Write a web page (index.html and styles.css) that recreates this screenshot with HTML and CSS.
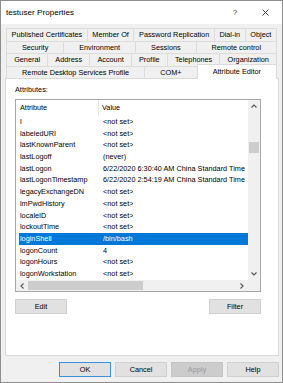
FILE: index.html
```html
<!DOCTYPE html>
<html lang="en">
<head>
<meta charset="UTF-8">
<title>testuser Properties</title>
<link rel="stylesheet" href="styles.css">
</head>
<body>
<div class="dialog">
  <div class="title-bar">
    <span class="title">testuser Properties</span>
    <span class="title-help">?</span>
    <span class="title-close">
      <svg width="7" height="7" viewBox="0 0 7 7"><path d="M0.5 0.5 L6.5 6.5 M6.5 0.5 L0.5 6.5" stroke="#333" stroke-width="0.9" fill="none"/></svg>
    </span>
  </div>

  <div class="tabs">
    <div class="tab-row">
      <span class="tab">Published Certificates</span>
      <span class="tab">Member Of</span>
      <span class="tab">Password Replication</span>
      <span class="tab">Dial-in</span>
      <span class="tab">Object</span>
    </div>
    <div class="tab-row">
      <span class="tab">Security</span>
      <span class="tab">Environment</span>
      <span class="tab">Sessions</span>
      <span class="tab">Remote control</span>
    </div>
    <div class="tab-row">
      <span class="tab">General</span>
      <span class="tab">Address</span>
      <span class="tab">Account</span>
      <span class="tab">Profile</span>
      <span class="tab">Telephones</span>
      <span class="tab">Organization</span>
    </div>
    <div class="tab-row">
      <span class="tab">Remote Desktop Services Profile</span>
      <span class="tab">COM+</span>
      <span class="tab active">Attribute Editor</span>
    </div>
  </div>

  <div class="panel">
    <div class="label">Attributes:</div>
    <div class="list-box">
      <div class="list-main">
        <div class="list-header">
          <span class="head-name">Attribute</span>
          <span class="head-value">Value</span>
        </div>
        <div class="list-row"><span class="col-name">l</span><span class="col-value">&lt;not set&gt;</span></div>
        <div class="list-row"><span class="col-name">labeledURI</span><span class="col-value">&lt;not set&gt;</span></div>
        <div class="list-row"><span class="col-name">lastKnownParent</span><span class="col-value">&lt;not set&gt;</span></div>
        <div class="list-row"><span class="col-name">lastLogoff</span><span class="col-value">(never)</span></div>
        <div class="list-row"><span class="col-name">lastLogon</span><span class="col-value">6/22/2020 6:30:40 AM China Standard Time</span></div>
        <div class="list-row"><span class="col-name">lastLogonTimestamp</span><span class="col-value">6/22/2020 2:54:19 AM China Standard Time</span></div>
        <div class="list-row"><span class="col-name">legacyExchangeDN</span><span class="col-value">&lt;not set&gt;</span></div>
        <div class="list-row"><span class="col-name">lmPwdHistory</span><span class="col-value">&lt;not set&gt;</span></div>
        <div class="list-row"><span class="col-name">localeID</span><span class="col-value">&lt;not set&gt;</span></div>
        <div class="list-row"><span class="col-name">lockoutTime</span><span class="col-value">&lt;not set&gt;</span></div>
        <div class="list-row selected"><span class="col-name">loginShell</span><span class="col-value">/bin/bash</span></div>
        <div class="list-row"><span class="col-name">logonCount</span><span class="col-value">4</span></div>
        <div class="list-row"><span class="col-name">logonHours</span><span class="col-value">&lt;not set&gt;</span></div>
        <div class="list-row"><span class="col-name">logonWorkstation</span><span class="col-value">&lt;not set&gt;</span></div>
      </div>

      <div class="v-scroll">
        <span class="arrow">
          <svg width="6" height="4" viewBox="0 0 6 4"><path d="M0.5 3.5 L3 1 L5.5 3.5" stroke="#555" stroke-width="1.1" fill="none"/></svg>
        </span>
        <div class="v-track"><div class="v-thumb"></div></div>
        <span class="arrow">
          <svg width="6" height="4" viewBox="0 0 6 4"><path d="M0.5 0.5 L3 3 L5.5 0.5" stroke="#555" stroke-width="1.1" fill="none"/></svg>
        </span>
      </div>

      <div class="h-scroll">
        <span class="arrow">
          <svg width="4" height="6" viewBox="0 0 4 6"><path d="M3.5 0.5 L1 3 L3.5 5.5" stroke="#555" stroke-width="1.1" fill="none"/></svg>
        </span>
        <div class="h-track"><div class="h-thumb"></div></div>
        <span class="arrow">
          <svg width="4" height="6" viewBox="0 0 4 6"><path d="M0.5 0.5 L3 3 L0.5 5.5" stroke="#555" stroke-width="1.1" fill="none"/></svg>
        </span>
      </div>
      <div class="corner"></div>
    </div>

    <div class="panel-buttons">
      <button class="btn">Edit</button>
      <button class="btn">Filter</button>
    </div>
  </div>

  <div class="footer">
    <button class="btn default">OK</button>
    <button class="btn">Cancel</button>
    <button class="btn disabled">Apply</button>
    <button class="btn">Help</button>
  </div>
</div>
</body>
</html>
```

FILE: styles.css
```css
* {
  font-family: "Liberation Sans", Arial, sans-serif;
  box-sizing: border-box;
}

body {
  margin: 0;
  padding: 0;
  background-color: #ffffff;
}

.dialog {
  width: 283px;
  height: 383px;
  border: 1px solid #8e8e8e;
  background-color: #f0f0f0;
  display: flex;
  flex-direction: column;
}

.title-bar {
  height: 23px;
  background-color: #ffffff;
  display: flex;
  align-items: center;
  padding: 0 2px 0 5px;
}

.title {
  flex: 1;
  font-size: 8.1px;
  color: #000;
}

.title-help {
  width: 30px;
  text-align: center;
  font-size: 8px;
  color: #333;
}

.title-close {
  width: 30px;
  display: flex;
  justify-content: center;
  align-items: center;
}

/* tab strip, four rows stretched to full width */
.tabs {
  margin: 4px 5px 0 5px;
  display: flex;
  flex-direction: column;
}

.tab-row {
  display: flex;
  height: 12.5px;
  align-items: flex-end;
}

.tab {
  flex: 1 1 auto;
  height: 12.5px;
  line-height: 11.5px;
  text-align: center;
  font-size: 7.3px;
  color: #000;
  white-space: nowrap;
  border: 1px solid #dcdcdc;
  border-bottom: none;
  margin-right: -1px;
  background-color: #f0f0f0;
}

.tab:last-child {
  margin-right: 0;
}

.tab.active {
  height: 15px;
  line-height: 13px;
  background-color: #ffffff;
  position: relative;
  z-index: 1;
  margin-bottom: -1px;
}

.panel {
  height: 278px;
  margin: 0 3px 0 4px;
  background-color: #ffffff;
  border: 1px solid #d9d9d9;
  padding: 6px 0 0 9px;
}

.label {
  font-size: 7.3px;
  line-height: 10px;
  color: #000;
}

.list-box {
  margin-top: 4px;
  width: 246px;
  height: 193px;
  border: 1px solid #a8a8a8;
  display: grid;
  grid-template-columns: 232px 12px;
  grid-template-rows: 180px 11px;
}

.list-main {
  overflow: hidden;
  background-color: #ffffff;
}

.list-header {
  height: 16px;
  display: flex;
  font-size: 7.3px;
  line-height: 16px;
  color: #000;
}

.head-name {
  width: 83px;
  padding-left: 4px;
  border-right: 1px solid #e8e8e8;
}

.head-value {
  padding-left: 3px;
}

.list-row {
  height: 11.7px;
  margin-left: 3px;
  display: flex;
  font-size: 7.3px;
  line-height: 11.7px;
  color: #000;
  white-space: nowrap;
}

.list-row.selected {
  background-color: #0078d7;
  color: #ffffff;
}

.col-name {
  width: 84px;
  flex-shrink: 0;
  padding-left: 1px;
}

.col-value {
  overflow: hidden;
}

.v-scroll {
  background-color: #f0f0f0;
  display: flex;
  flex-direction: column;
}

.v-scroll .arrow {
  height: 12px;
  display: flex;
  justify-content: center;
  align-items: center;
}

.v-track {
  flex: 1;
}

.v-thumb {
  margin: 30px 1px 0 1px;
  height: 11px;
  background-color: #cdcdcd;
}

.h-scroll {
  background-color: #f0f0f0;
  display: flex;
}

.h-scroll .arrow {
  width: 12px;
  display: flex;
  justify-content: center;
  align-items: center;
}

.h-track {
  flex: 1;
  padding: 1px 0;
}

.h-thumb {
  width: 115px;
  height: 100%;
  background-color: #cdcdcd;
}

.corner {
  background-color: #f0f0f0;
}

.btn {
  width: 52px;
  height: 15px;
  padding: 0;
  font-size: 7.3px;
  color: #000;
  background-color: #e1e1e1;
  border: 1px solid #cfcfcf;
}

.btn.default {
  border: 1px solid #3c8fd9;
}

.btn.disabled {
  background-color: #cccccc;
  border-color: #c4c4c4;
  color: #9a9a9a;
}

.panel-buttons {
  width: 246px;
  margin-top: 7px;
  display: flex;
  justify-content: space-between;
}

.footer {
  display: flex;
  justify-content: flex-end;
  gap: 4px;
  padding: 6px 3px 0 0;
}
```
